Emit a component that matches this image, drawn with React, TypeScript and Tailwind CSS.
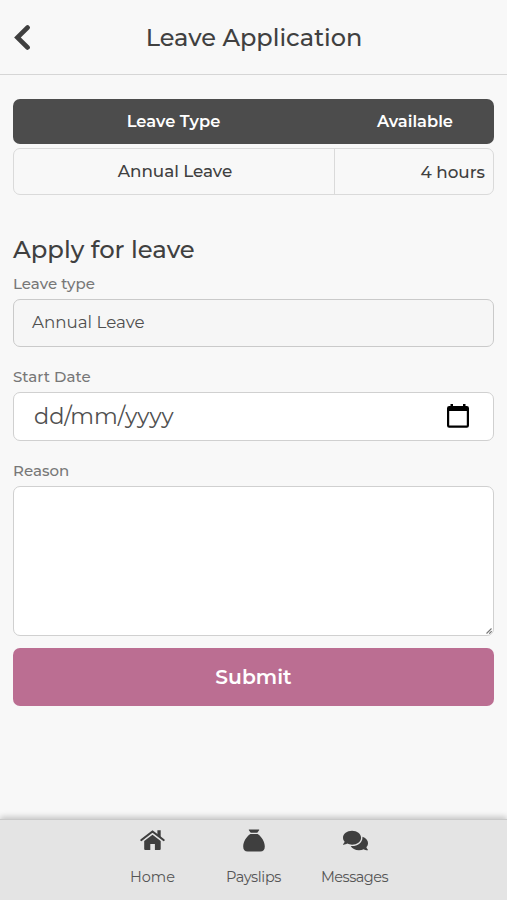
import { useState } from 'react';
import type { ReactNode } from 'react';
import { FaComments } from 'react-icons/fa';

function BackIcon() {
  return (
    <svg viewBox="0 0 16 26" className="h-[26px] w-4" fill="none">
      <path d="M13.600 3.500 3.400 13.500 13.600 23.500" stroke="#3f3f3f" strokeWidth="4.600" strokeLinecap="round" />
    </svg>
  );
}

function CalendarIcon() {
  return (
    <svg viewBox="0 0 22 24" className="mb-0.5 h-6 w-[22px]">
      <path d="M3.500 0h2.500v2h10V0h2.500v2h1.300A2.200 2.200 0 0 1 22 4.200v17.400a2.200 2.200 0 0 1-2.200 2.200H2.200A2.200 2.200 0 0 1 0 21.600V4.200A2.200 2.200 0 0 1 2.200 2h1.300ZM2.200 7v14.600h17.600V7Z" fill="#000" fillRule="evenodd" />
    </svg>
  );
}

function HomeIcon() {
  return (
    <svg viewBox="0 0 25 20" className="h-5 w-[25px]" fill="none">
      <path d="M1.400 10 12.500 1.500 23.600 10" stroke="#3f3f3f" strokeWidth="2.200" strokeLinecap="round" strokeLinejoin="round" />
      <path d="M17.400 0.200h3.300v7l-3.300-2.500Z" fill="#3f3f3f" />
      <path d="M12.500 4.700 20.700 11v8a1 1 0 0 1-1 1h-4.800v-6h-4.600v6H5.200a1 1 0 0 1-1-1v-8Z" fill="#3f3f3f" />
    </svg>
  );
}

function SackIcon() {
  return (
    <svg viewBox="0 0 22 23" className="h-[23px] w-[22px]" fill="#3f3f3f">
      <path d="M6.300 0.500h9.400c.5 0 .6.300.4.700L14.300 3.700H7.700L5.900 1.200c-.2-.4-.1-.7.4-.7Z" />
      <path d="M7.400 4.900h7.200c4.200 2.600 7.200 8 7.200 12.500 0 3.200-1.600 5.100-4.500 5.100H4.700c-2.900 0-4.500-1.900-4.500-5.100 0-4.500 3-9.900 7.200-12.500Z" />
    </svg>
  );
}

function FieldLabel({ children }: { children: ReactNode }) {
  return <span className="block h-5 text-[15px] font-medium leading-5 tracking-[0.05px] text-[#777]">{children}</span>;
}

const navItems = [
  { label: 'Home', icon: <HomeIcon />, tracking: 'tracking-normal' },
  { label: 'Payslips', icon: <SackIcon />, tracking: 'tracking-[-0.35px]' },
  { label: 'Messages', icon: <FaComments size={25} className="ml-px" />, tracking: 'tracking-[-0.5px]' },
];

export default function App() {
  const [reason, setReason] = useState('');

  return (
    <div className="flex h-[900px] w-[507px] flex-col overflow-hidden bg-[#f8f8f8] font-['Montserrat','Inter',sans-serif] text-[#404040]">
      <header className="flex h-[75px] shrink-0 items-center border-b-[1.5px] border-[#d6d6d6] px-[14px]">
        <button className="w-4">
          <BackIcon />
        </button>
        <h1 className="flex-1 pr-[15px] pt-0.5 text-center text-2xl font-medium">Leave Application</h1>
      </header>

      <main className="flex-1 px-[13px] pt-6">
        <div className="flex h-[45px] items-center rounded-[7px] bg-[#4c4c4c] text-[16.3px] font-semibold text-white">
          <div className="w-[321px] text-center">Leave Type</div>
          <div className="flex-1 pl-0.5 text-center">Available</div>
        </div>
        <div className="mt-1 flex h-[47px] rounded-[7px] border-[1.5px] border-[#dadada] text-[16.8px] font-medium">
          <div className="flex w-[321px] items-center justify-center border-r-[1.5px] border-[#dadada] pl-0.5 tracking-[-0.05px]">
            Annual Leave
          </div>
          <div className="flex flex-1 items-center justify-end pr-2 pt-0.5">4 hours</div>
        </div>

        <form onSubmit={(e) => e.preventDefault()}>
          <h2 className="mt-9 h-9 text-[24.3px] font-medium leading-9">Apply for leave</h2>
          <div className="mt-[7px]">
            <FieldLabel>Leave type</FieldLabel>
            <div className="mt-[5px] flex h-12 items-center rounded-[7px] border-[1.5px] border-[#cacaca] bg-[#f6f6f6] px-[18px] text-[16.7px] text-[#505050]">
              Annual Leave
            </div>
          </div>
          <div className="mt-5">
            <FieldLabel>Start Date</FieldLabel>
            <div className="mt-[5px] flex h-[49px] items-center justify-between rounded-[7px] border-[1.5px] border-[#d0d0d0] bg-white pl-5 pr-6 text-[22.4px] text-[#505050]">
              <span>dd/mm/yyyy</span>
              <CalendarIcon />
            </div>
          </div>
          <div className="mt-5">
            <FieldLabel>Reason</FieldLabel>
            <div className="relative mt-[5px]">
              <textarea
                value={reason}
                onChange={(e) => setReason(e.target.value)}
                className="block h-[150px] w-full resize-none rounded-[7px] border-[1.5px] border-[#d0d0d0] bg-white p-4"
              />
              <svg viewBox="0 0 6 6" className="pointer-events-none absolute bottom-0.5 right-0.5 h-1.5 w-1.5">
                <path d="M0.500 5.500 5.500 0.500M3.200 5.700 5.700 3.200" stroke="#777" strokeWidth="1.100" />
              </svg>
            </div>
          </div>
          <button className="mt-3 h-[58px] w-full rounded-[7px] bg-[#bb6e92] text-[20.3px] font-semibold text-white">
            Submit
          </button>
        </form>
      </main>

      <nav className="flex h-[81px] shrink-0 justify-center border-t border-[#c9c9c9] bg-[#e4e4e4] shadow-[0_-2px_6px_rgba(0,0,0,0.22)]">
        {navItems.map((item) => (
          <a key={item.label} className="flex w-[101px] flex-col items-center">
            <span className="mt-2 flex h-6 items-center text-[#3f3f3f]">{item.icon}</span>
            <span className={`mt-[15px] text-[14.5px] leading-5 text-[#555] ${item.tracking}`}>{item.label}</span>
          </a>
        ))}
      </nav>
    </div>
  );
}
